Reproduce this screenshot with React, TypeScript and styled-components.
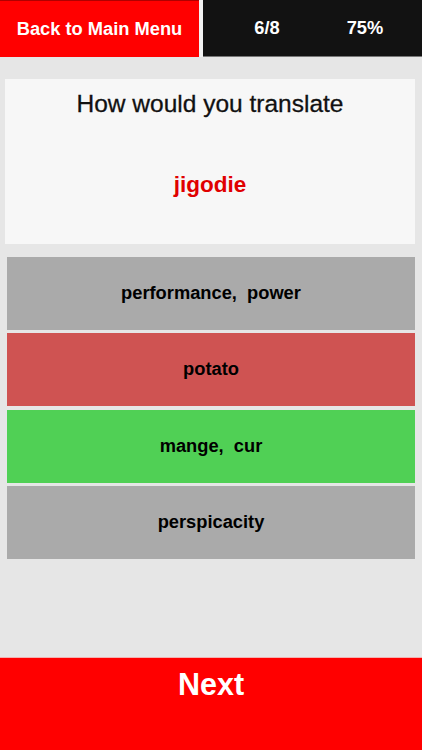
import React from "react";
import styled, { createGlobalStyle } from "styled-components";

const GlobalStyle = createGlobalStyle`
  html, body {
    margin: 0;
    padding: 0;
    background: #e6e6e6;
  }
  body {
    font-family: "Liberation Sans", Arial, Helvetica, sans-serif;
  }
`;

const Screen = styled.div`
  width: 422px;
  height: 750px;
  display: flex;
  flex-direction: column;
  background: #e6e6e6;
  overflow: hidden;
`;

const TopBar = styled.div`
  height: 57px;
  display: flex;
  background: #f2f2f2;
  gap: 4px;
`;

const BackButton = styled.button`
  width: 199px;
  border: none;
  border-top: 1px solid #b00000;
  background: #ff0000;
  color: #ffffff;
  font-family: inherit;
  font-weight: bold;
  font-size: 18.3px;
  padding: 0;
  cursor: pointer;
`;

const Stats = styled.div`
  flex: 1;
  display: flex;
  justify-content: center;
  align-items: center;
  padding-left: 7px;
  background: #121212;
  border-bottom: 1px solid #777;
`;

const Stat = styled.div`
  width: 98px;
  text-align: center;
  color: #ffffff;
  font-weight: bold;
  font-size: 18.3px;
`;

const Content = styled.div`
  flex: 1;
  display: flex;
  flex-direction: column;
  padding: 22px 7px 0 5px;
`;

const QuestionCard = styled.div`
  height: 165px;
  background: #f7f7f7;
  display: flex;
  flex-direction: column;
  align-items: center;
`;

const Prompt = styled.div`
  margin-top: 11px;
  font-size: 24.5px;
  color: #111;
  -webkit-text-stroke: 0.3px #111;
`;

const Word = styled.div`
  margin-top: 54px;
  font-size: 22.5px;
  font-weight: bold;
  color: #e00000;
`;

const Options = styled.div`
  display: flex;
  flex-direction: column;
  gap: 3.4px;
  margin-top: 13px;
  padding-left: 2px;
`;

type Tone = "neutral" | "wrong" | "right";

const toneColors: Record<Tone, string> = {
  neutral: "#aaaaaa",
  wrong: "#cf5352",
  right: "#50d055",
};

const Option = styled.button<{ $tone: Tone }>`
  height: 73px;
  border: none;
  padding: 0 0 1px;
  background: ${(p) => toneColors[p.$tone]};
  color: #000;
  font-family: inherit;
  font-weight: bold;
  font-size: 18.3px;
  white-space: pre;
  cursor: pointer;
`;

const NextBar = styled.button`
  height: 93px;
  border: none;
  border-top: 1px solid #f4b0b0;
  background: #ff0000;
  color: #fff;
  font-family: inherit;
  font-weight: bold;
  font-size: 30.5px;
  display: flex;
  justify-content: center;
  align-items: flex-start;
  padding-top: 9px;
  cursor: pointer;
`;

const answers: { text: string; tone: Tone }[] = [
  { text: "performance,  power", tone: "neutral" },
  { text: "potato", tone: "wrong" },
  { text: "mange,  cur", tone: "right" },
  { text: "perspicacity", tone: "neutral" },
];

const App = () => {
  return (
    <Screen>
      <GlobalStyle />
      <TopBar>
        <BackButton type="button">Back to Main Menu</BackButton>
        <Stats>
          <Stat>6/8</Stat>
          <Stat>75%</Stat>
        </Stats>
      </TopBar>
      <Content>
        <QuestionCard>
          <Prompt>How would you translate</Prompt>
          <Word>jigodie</Word>
        </QuestionCard>
        <Options>
          {answers.map((a) => (
            <Option key={a.text} $tone={a.tone} type="button">
              {a.text}
            </Option>
          ))}
        </Options>
      </Content>
      <NextBar type="button">Next</NextBar>
    </Screen>
  );
};

export default App;
